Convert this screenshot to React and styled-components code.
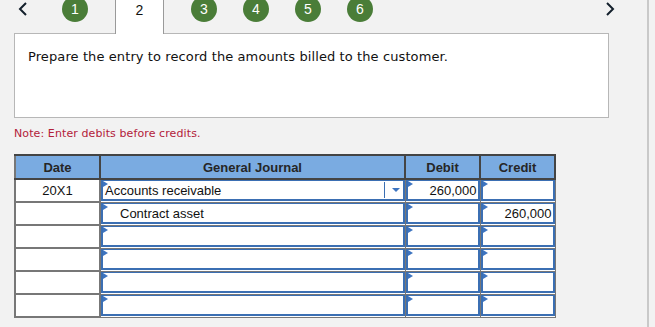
import styled, { createGlobalStyle } from 'styled-components';

const GlobalStyle = createGlobalStyle`
  html, body {
    margin: 0;
    padding: 0;
    background: #f2f2f2;
    overflow: hidden;
  }
  body {
    font-family: "Liberation Sans", Arial, sans-serif;
  }
`;

const Page = styled.div`
  width: 647px;
  height: 327px;
  border-right: 2px solid #c9c9c9;
  background: #f2f2f2;
  overflow: hidden;
`;

const Nav = styled.div`
  display: flex;
  align-items: center;
  height: 48px;
  margin-top: -15px;
  padding-left: 17px;
`;

const Arrow = styled.button`
  display: flex;
  align-items: center;
  justify-content: center;
  width: 12px;
  height: 20px;
  padding: 0;
  border: none;
  background: none;
  margin-right: ${p => p.gap || 0}px;
  margin-left: ${p => p.push || 0}px;
`;

const Steps = styled.div`
  display: flex;
  align-items: center;
  gap: 26px;
  height: 100%;
`;

const Circle = styled.span`
  width: 26px;
  height: 26px;
  border-radius: 50%;
  background: #4a7d38;
  color: #fff;
  font-size: 14px;
  display: flex;
  align-items: center;
  justify-content: center;
`;

const CurrentTab = styled.span`
  align-self: flex-start;
  width: 49px;
  height: 49px;
  margin: 0 1px;
  box-sizing: border-box;
  background: #fff;
  border-left: 1px solid #9a9a9a;
  border-right: 1px solid #9a9a9a;
  display: flex;
  align-items: center;
  justify-content: center;
  font-size: 14px;
  color: #111;
  position: relative;
  z-index: 1;
`;

const Prompt = styled.div`
  margin: 0 0 0 14px;
  width: 595px;
  height: 85px;
  box-sizing: border-box;
  background: #fff;
  border: 1px solid #b7b7b7;
  padding: 15px 0 0 13px;
  font-family: "DejaVu Sans", Verdana, sans-serif;
  font-size: 13px;
  letter-spacing: 0.1px;
  color: #111;
`;

const Note = styled.div`
  margin: 9px 0 0 14px;
  font-family: "DejaVu Sans", Verdana, sans-serif;
  font-size: 11px;
  letter-spacing: 0.1px;
  color: #b2213a;
`;

const Journal = styled.table`
  margin: 14px 0 0 14px;
  border-collapse: collapse;
  table-layout: fixed;
  width: 541px;
  font-size: 13px;
  color: #111;
`;

const Head = styled.th`
  height: 22px;
  padding: 0;
  background: #7aabe1;
  border: 2px solid #444;
  border-left-color: #777;
  font-size: 13px;
  font-weight: bold;
  color: #262626;
  text-align: center;
`;

const DateCell = styled.td`
  height: 21px;
  padding: 0;
  background: #fff;
  border: 2px solid #777;
  text-align: center;
`;

const Cell = styled.td`
  height: 21px;
  padding: 0;
  border: 1px solid #777;
  background: #fff;
`;

const Field = styled.div`
  position: relative;
  height: 21px;
  box-sizing: border-box;
  border: 2px solid #3b6fb3;
  border-top-width: 1px;
  background: #fff;
  display: flex;
  align-items: center;
  justify-content: ${p => (p.num ? 'flex-end' : 'flex-start')};
  padding: 0 ${p => (p.num ? '1px' : '0')} 0 ${p => p.indent || 2}px;
  &::before {
    content: '';
    position: absolute;
    left: 0;
    top: 0;
    border-left: 5px solid #3d74c0;
    border-top: 3px solid transparent;
    border-bottom: 3px solid transparent;
  }
`;

const Caret = styled.span`
  margin-left: auto;
  margin-right: 3px;
  display: flex;
  align-items: center;
  height: 16px;
  padding-left: 7px;
  border-left: 1px solid #3b6fb3;
  &::after {
    content: '';
    border-top: 4px solid #3d74c0;
    border-left: 4px solid transparent;
    border-right: 4px solid transparent;
  }
`;

const Chevron = ({ dir }) => (
  <svg width="10" height="14" viewBox="0 0 10 14">
    <polyline
      points={dir === 'left' ? '8,1 2,7 8,13' : '2,1 8,7 2,13'}
      fill="none"
      stroke="#14202c"
      strokeWidth="2"
    />
  </svg>
);

const rows = [
  { date: '20X1', account: 'Accounts receivable', select: true, debit: '260,000', credit: '' },
  { date: '', account: 'Contract asset', indent: 17, debit: '', credit: '260,000' },
  { date: '', account: '', debit: '', credit: '' },
  { date: '', account: '', debit: '', credit: '' },
  { date: '', account: '', debit: '', credit: '' },
  { date: '', account: '', debit: '', credit: '' },
];

export default function App() {
  return (
    <>
      <GlobalStyle />
      <Page>
        <Nav>
          <Arrow gap={33}>
            <Chevron dir="left" />
          </Arrow>
          <Steps>
            <Circle>1</Circle>
            <CurrentTab>2</CurrentTab>
            <Circle>3</Circle>
            <Circle>4</Circle>
            <Circle>5</Circle>
            <Circle>6</Circle>
          </Steps>
          <Arrow push={231}>
            <Chevron dir="right" />
          </Arrow>
        </Nav>
        <Prompt>Prepare the entry to record the amounts billed to the customer.</Prompt>
        <Note>Note: Enter debits before credits.</Note>
        <Journal>
          <colgroup>
            <col style={{ width: 85 }} />
            <col style={{ width: 305 }} />
            <col style={{ width: 75 }} />
            <col style={{ width: 75 }} />
          </colgroup>
          <thead>
            <tr>
              <Head>Date</Head>
              <Head>General Journal</Head>
              <Head>Debit</Head>
              <Head>Credit</Head>
            </tr>
          </thead>
          <tbody>
            {rows.map((r, i) => (
              <tr key={i}>
                <DateCell>{r.date}</DateCell>
                <Cell>
                  <Field indent={r.indent}>
                    {r.account}
                    {r.select && <Caret />}
                  </Field>
                </Cell>
                <Cell>
                  <Field num>{r.debit}</Field>
                </Cell>
                <Cell>
                  <Field num>{r.credit}</Field>
                </Cell>
              </tr>
            ))}
          </tbody>
        </Journal>
      </Page>
    </>
  );
}
